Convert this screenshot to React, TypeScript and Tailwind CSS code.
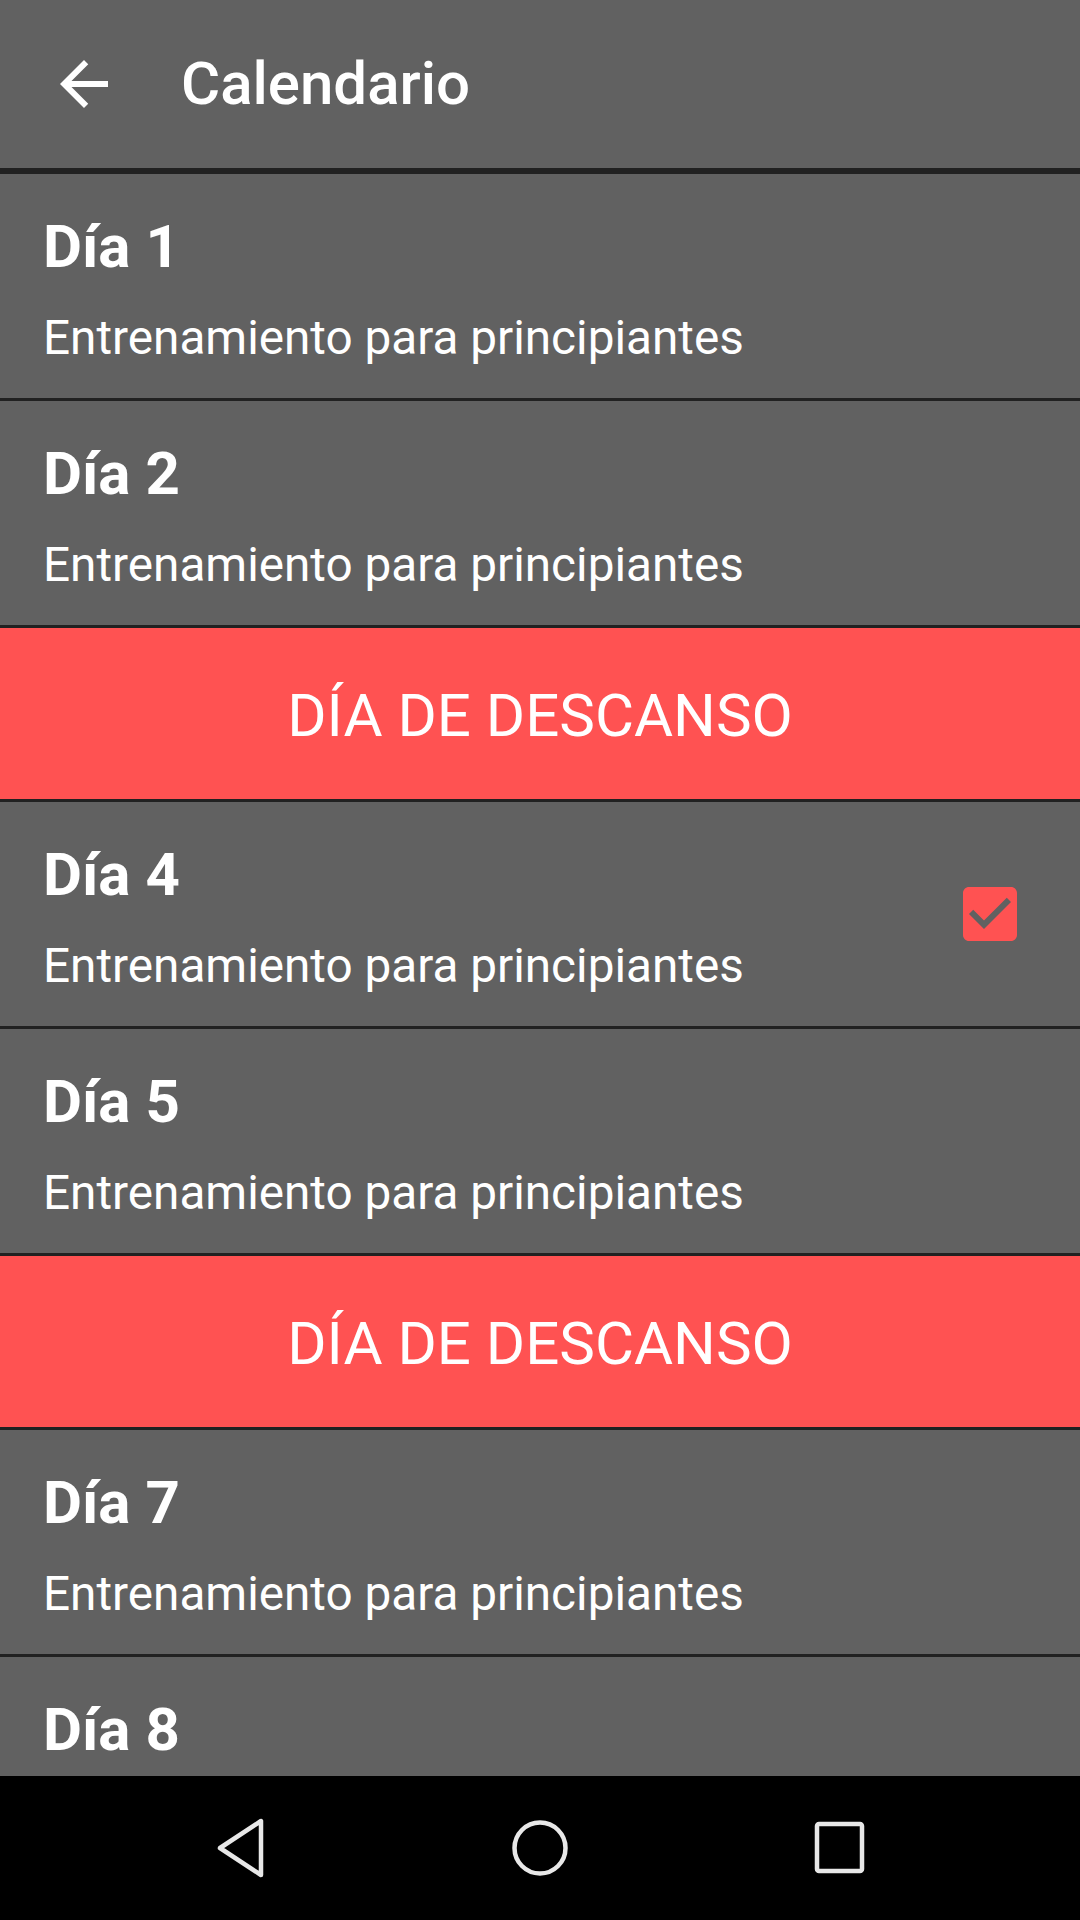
const days = [
  { type: "day", label: "Día 1" },
  { type: "day", label: "Día 2" },
  { type: "rest" },
  { type: "day", label: "Día 4", done: true },
  { type: "day", label: "Día 5" },
  { type: "rest" },
  { type: "day", label: "Día 7" },
  { type: "day", label: "Día 8" },
];

function CheckBox() {
  return (
    <svg width="72" height="72" viewBox="0 0 24 24">
      <path
        fill="#ff5252"
        d="M19 3H5c-1.11 0-2 .9-2 2v14c0 1.1.89 2 2 2h14c1.11 0 2-.9 2-2V5c0-1.1-.89-2-2-2zm-9 14l-5-5 1.41-1.41L10 14.17l7.59-7.59L19 8l-9 9z"
      />
    </svg>
  );
}

function DayRow({ label, done }: { label: string; done?: boolean }) {
  return (
    <div className="h-[224px] shrink-0 flex items-center bg-[#616161] border-b-[3px] border-[#212121] box-content">
      <div className="flex-1 h-full pl-[43px] pt-[43px]">
        <div className="text-[60px] leading-[60px] font-bold text-white">{label}</div>
        <div className="mt-[37px] text-[47.7px] leading-[48px] text-white">Entrenamiento para principiantes</div>
      </div>
      {done && (
        <div className="pr-[54px]">
          <CheckBox />
        </div>
      )}
    </div>
  );
}

function RestRow() {
  return (
    <div className="h-[171px] shrink-0 flex items-center justify-center bg-[#ff5252] border-b-[3px] border-[#212121] box-content">
      <span className="text-[60px] leading-[60px] text-white pt-[4px]">DÍA DE DESCANSO</span>
    </div>
  );
}

export default function App() {
  return (
    <div className="w-[1080px] h-[1920px] flex flex-col bg-[#616161]" style={{ fontFamily: "Roboto, 'Noto Sans', sans-serif" }}>
      <header className="h-[168px] shrink-0 flex items-center bg-[#616161] border-b-[6px] border-[#212121] box-content">
        <button className="w-[72px] h-[72px] ml-[48px] text-white">
          <svg width="72" height="72" viewBox="0 0 24 24" fill="currentColor">
            <path d="M20 11H7.83l5.59-5.59L12 4l-8 8 8 8 1.41-1.41L7.83 13H20v-2z" />
          </svg>
        </button>
        <h1 className="ml-[61px] text-[60px] leading-[60px] font-medium text-white">Calendario</h1>
      </header>

      <div className="flex-1 overflow-hidden flex flex-col">
        {days.map((d, i) =>
          d.type === "rest" ? <RestRow key={i} /> : <DayRow key={i} label={d.label!} done={d.done} />
        )}
      </div>

      <nav className="h-[144px] shrink-0 bg-black grid grid-cols-3 px-[90px]">
        <div className="flex items-center justify-center">
          <svg width="60" height="64" viewBox="0 0 60 64" fill="none" stroke="#e8e8e8" strokeWidth="4.5" strokeLinejoin="round">
            <path d="M51 5 L51 59 L10 32 Z" />
          </svg>
        </div>
        <div className="flex items-center justify-center">
          <svg width="60" height="60" viewBox="0 0 60 60" fill="none" stroke="#e8e8e8" strokeWidth="4.5">
            <circle cx="30" cy="30" r="25.5" />
          </svg>
        </div>
        <div className="flex items-center justify-center">
          <svg width="52" height="54" viewBox="0 0 52 54" fill="none" stroke="#e8e8e8" strokeWidth="4.5" strokeLinejoin="round">
            <rect x="3" y="3" width="45" height="47" rx="2" />
          </svg>
        </div>
      </nav>
    </div>
  );
}
